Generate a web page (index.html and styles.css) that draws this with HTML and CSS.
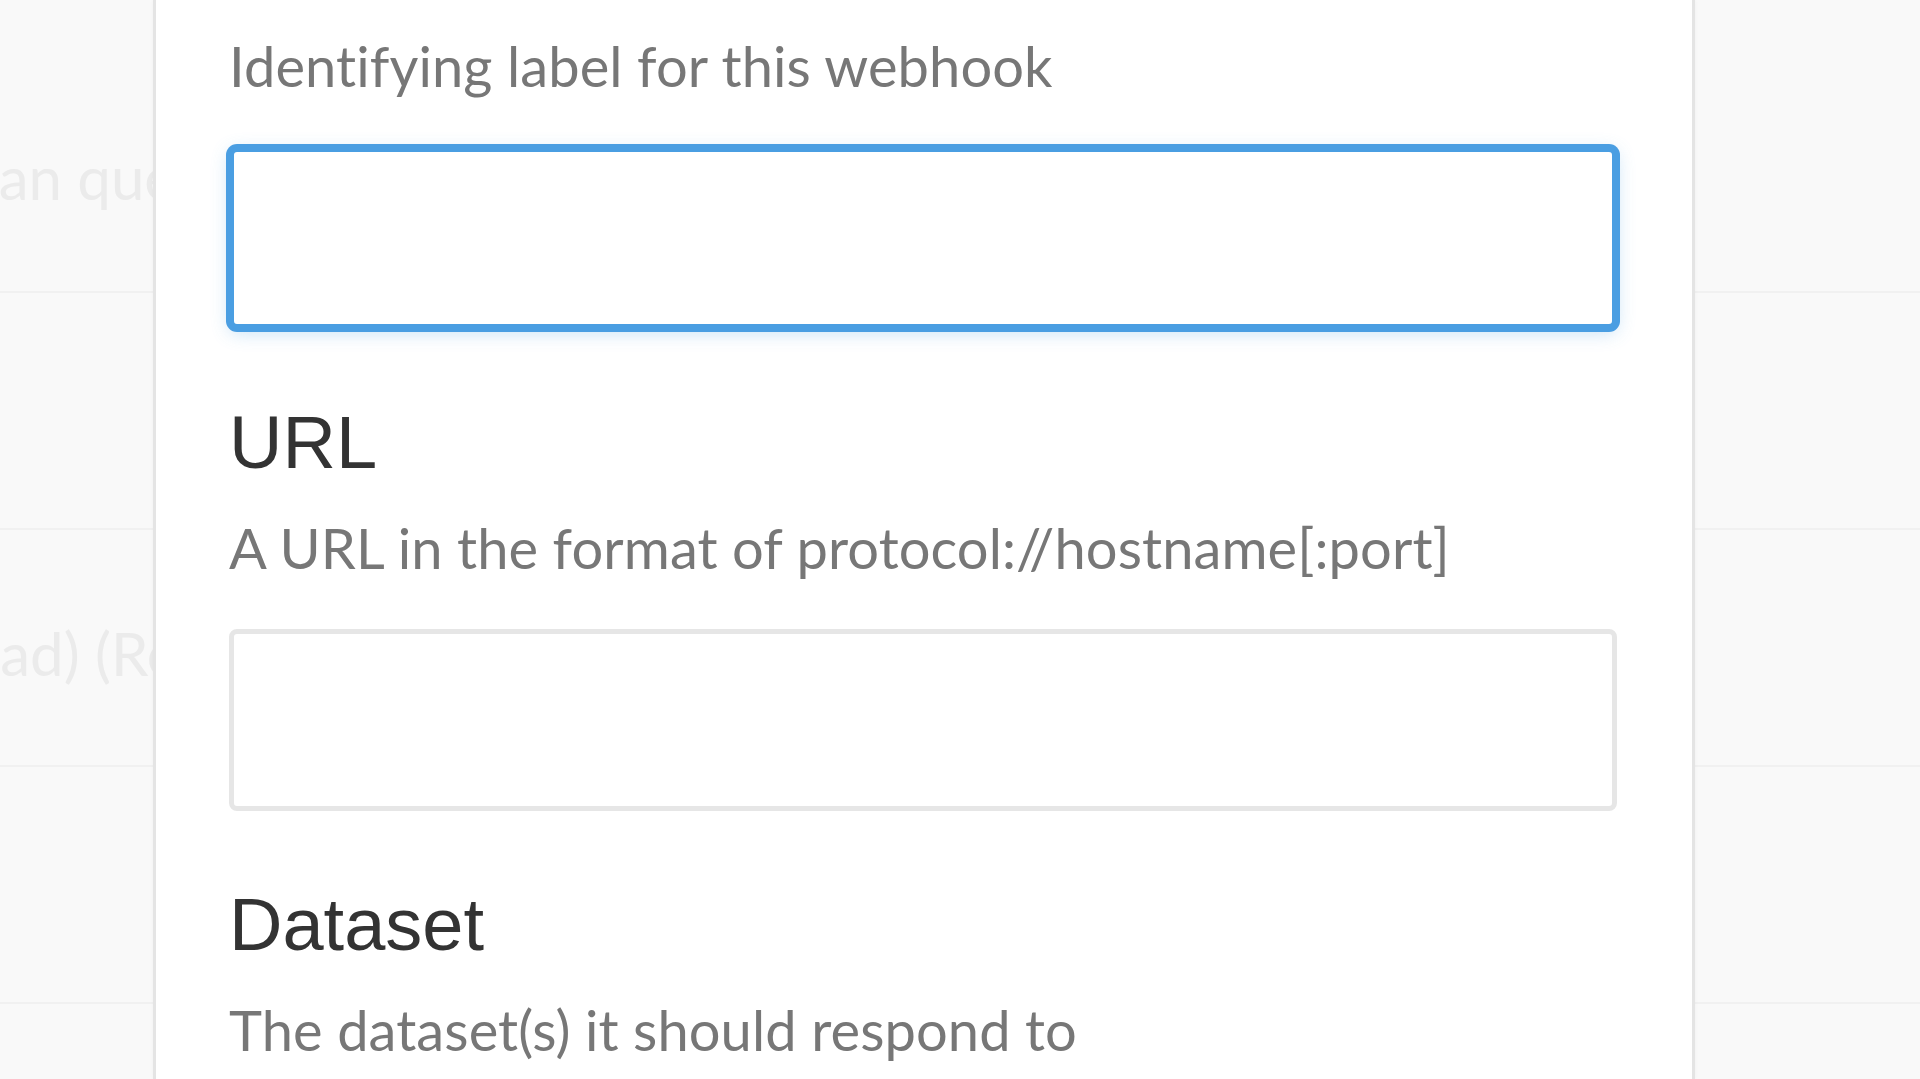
FILE: index.html
```html
<!DOCTYPE html>
<html lang="en">
<head>
<meta charset="utf-8">
<title>New webhook</title>
<link rel="stylesheet" href="styles.css">
</head>
<body>
<div class="page">
  <div class="bg-list">
    <div class="bg-row"><span class="bg-text bg-text-a">can query this data</span></div>
    <div class="bg-row"><span class="bg-text"></span></div>
    <div class="bg-row"><span class="bg-text bg-text-b">read) (Read-only access</span></div>
    <div class="bg-row"><span class="bg-text"></span></div>
  </div>

  <div class="modal">
    <div class="modal-body">
      <div class="field">
        <p class="field-desc">Identifying label for this webhook</p>
        <input class="field-input is-focused" type="text">
      </div>
      <div class="field">
        <h2 class="field-title">URL</h2>
        <p class="field-desc">A URL in the format of protocol://hostname[:port]</p>
        <input class="field-input" type="text">
      </div>
      <div class="field">
        <h2 class="field-title">Dataset</h2>
        <p class="field-desc">The dataset(s) it should respond to</p>
      </div>
    </div>
  </div>
</div>
</body>
</html>
```

FILE: styles.css
```css
* { box-sizing: border-box; }

html, body {
  margin: 0;
  padding: 0;
  height: 100%;
}

body {
  background: #f9f9f9;
  font-family: Lato, "Liberation Sans", sans-serif;
  overflow: hidden;
}

.page {
  position: relative;
  width: 1920px;
  height: 1079px;
  overflow: hidden;
}

/* background list behind the modal */
.bg-list {
  display: flex;
  flex-direction: column;
  padding-top: 56px;
}

.bg-row {
  height: 237px;
  border-bottom: 2px solid #f1f1f1;
  display: flex;
  align-items: center;
  white-space: nowrap;
  overflow: hidden;
}

.bg-text {
  font-size: 60px;
  color: #ebebeb;
  line-height: 68px;
}

.bg-text-a {
  margin-left: -30px;
  margin-top: 6px;
}

.bg-text-b {
  margin-left: -52px;
  margin-top: 10px;
}

/* modal */
.modal {
  position: absolute;
  top: 0;
  left: 153px;
  width: 1542px;
  height: 1079px;
  background: #ffffff;
  border-left: 3px solid #e4e4e4;
  border-right: 3px solid #e4e4e4;
  box-shadow: 0 0 4px rgba(0, 0, 0, 0.04);
}

.modal-body {
  padding: 34px 75px 0 73px;
  display: flex;
  flex-direction: column;
}

.field {
  display: flex;
  flex-direction: column;
}

.field-title {
  margin: 0 0 36px 0;
  font-family: "Liberation Sans", Arial, sans-serif;
  font-weight: 400;
  font-size: 74px;
  line-height: 74px;
  color: #333333;
}

.field-desc {
  margin: 0 0 49px 0;
  font-family: Lato, "Liberation Sans", sans-serif;
  font-size: 56px;
  letter-spacing: 0.1px;
  line-height: 64px;
  color: #777777;
}

.field-input {
  display: block;
  width: 100%;
  height: 182px;
  margin: 0 0 77px 0;
  border: 5px solid #e6e6e6;
  border-radius: 8px;
  background: #ffffff;
  outline: none;
  font-family: Lato, sans-serif;
  font-size: 55px;
  padding: 0 24px;
}

.field-input.is-focused {
  border-color: #4a9ee2;
  box-shadow: 0 0 0 3px #4a9ee2, 0 4px 18px rgba(74, 158, 226, 0.3);
}
```
